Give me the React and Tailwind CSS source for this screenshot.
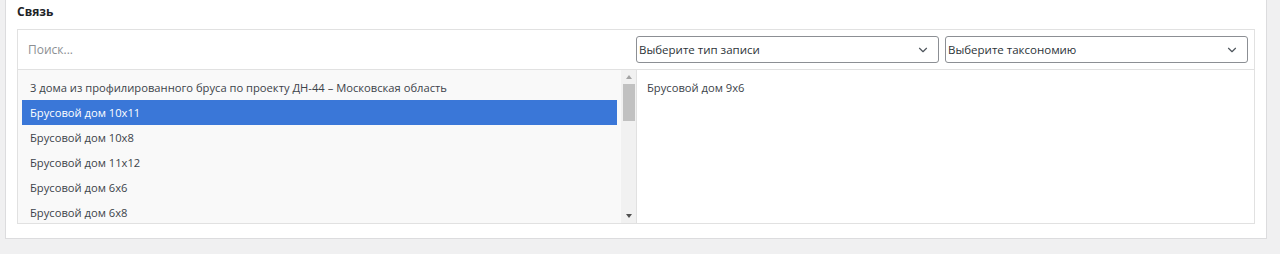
import { ChevronDown } from 'lucide-react'

const ITEMS = [
  '3 дома из профилированного бруса по проекту ДН-44 – Московская область',
  'Брусовой дом 10х11',
  'Брусовой дом 10х8',
  'Брусовой дом 11х12',
  'Брусовой дом 6х6',
  'Брусовой дом 6х8',
]

export default function App() {
  return (
    <div className="h-[254px] bg-[#f0f0f1] pl-[5px] pr-[13px] font-['Open_Sans','Noto_Sans',sans-serif] text-[#3c434a]">
      {/* панель */}
      <div className="h-[239px] bg-white border border-t-0 border-[#dcdcde] px-[11px] pt-[5px]">
        <div className="text-[12px] font-bold text-[#1d2327] leading-[14px] h-[24px]">Связь</div>

        {/* рамка связи */}
        <div className="border border-[#e1e1e1] h-[195px] flex flex-col">
          <div className="h-[40px] flex items-center border-b border-[#e1e1e1]">
            <div className="flex-1 pl-[10px] text-[12px] text-[#8c8f94]">Поиск...</div>
            <Select label="Выберите тип записи" className="w-[303px] mr-[6px]" />
            <Select label="Выберите таксономию" className="w-[303px] mr-[6px]" />
          </div>

          <div className="flex flex-1 min-h-0">
            {/* левый список */}
            <div className="w-[619px] flex bg-[#f9f9f9] border-r border-[#e1e1e1]">
              <ul className="flex-1 pl-[4px] pr-[4px] pt-[5px] overflow-hidden">
                {ITEMS.map((t, i) => (
                  <li
                    key={t}
                    className={
                      'block h-[25px] leading-[26px] pl-[8px] text-[11.2px] whitespace-nowrap ' +
                      (i === 1 ? 'bg-[#3a77d8] text-white' : 'text-[#3c434a]')
                    }
                  >
                    {t}
                  </li>
                ))}
              </ul>
              {/* скроллбар */}
              <div className="w-[15px] flex flex-col items-center bg-[#f1f1f1]">
                <div className="h-[14px] flex items-center justify-center">
                  <div className="w-0 h-0 border-l-[3px] border-r-[3px] border-b-[4px] border-l-transparent border-r-transparent border-b-[#a3a3a3]" />
                </div>
                <div className="w-[12px] h-[37px] bg-[#c1c1c1]" />
                <div className="flex-1" />
                <div className="h-[14px] flex items-center justify-center">
                  <div className="w-0 h-0 border-l-[3px] border-r-[3px] border-t-[4px] border-l-transparent border-r-transparent border-t-[#505050]" />
                </div>
              </div>
            </div>

            {/* правый список */}
            <div className="flex-1 bg-white pl-[10px] pt-[9px]">
              <div className="text-[11.2px] text-[#3c434a] leading-[18px]">Брусовой дом 9х6</div>
            </div>
          </div>
        </div>
      </div>
    </div>
  )
}

function Select({ label, className }) {
  return (
    <div
      className={
        'h-[27px] border border-[#8c8f94] rounded-[3px] bg-white flex items-center justify-between pl-[2px] pr-[8px] ' +
        className
      }
    >
      <span className="text-[11.5px] text-[#2c3338]">{label}</span>
      <ChevronDown size={14} strokeWidth={2} className="text-[#50575e]" />
    </div>
  )
}
